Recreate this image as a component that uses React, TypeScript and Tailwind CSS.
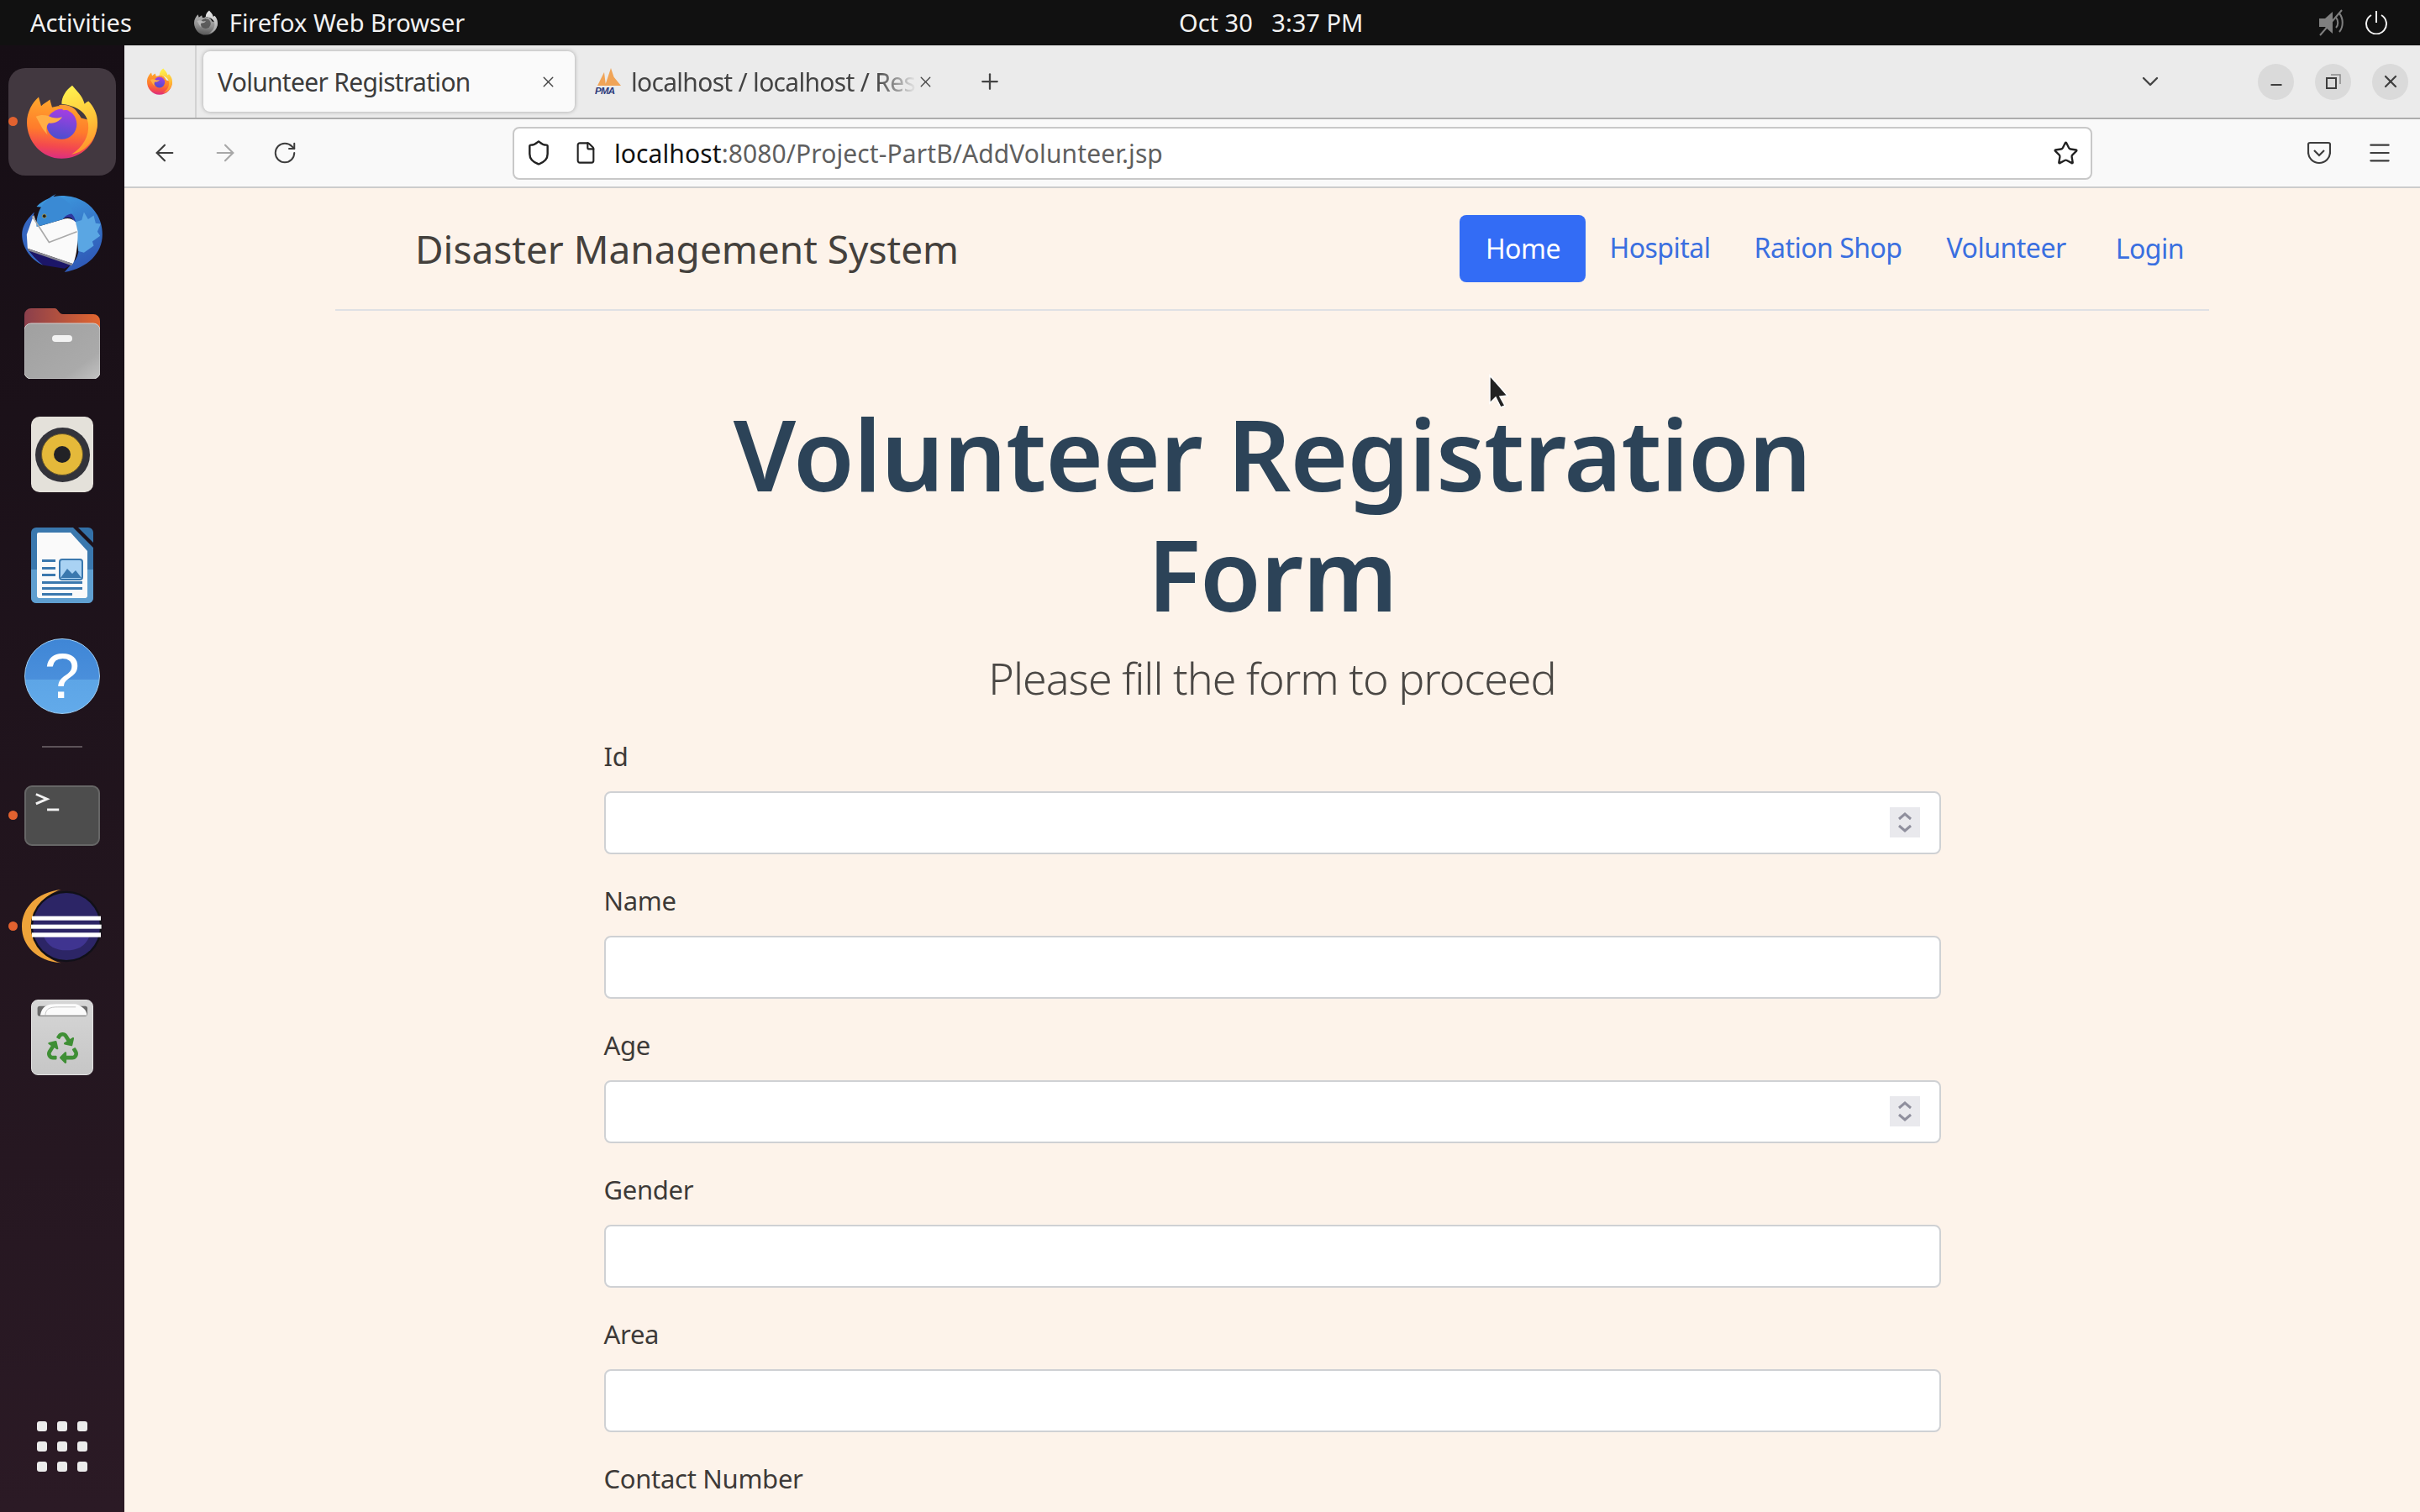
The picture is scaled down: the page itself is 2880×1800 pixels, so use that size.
import React from 'react';
import { ArrowLeft, ArrowRight, ChevronDown, File, Menu, Minus, Plus, RotateCw, Shield, Star, X } from 'lucide-react';
import { FaRecycle } from 'react-icons/fa';

const FirefoxLogo: React.FC<{ className?: string }> = ({ className }) => (
  <svg viewBox="66 62 252 263" className={className}>
    <defs>
      <linearGradient id="ffBody" x1="0.6" y1="0.1" x2="0.5" y2="1">
        <stop offset="0" stopColor="#ffa42c" />
        <stop offset="0.5" stopColor="#ff7b2b" />
        <stop offset="0.8" stopColor="#f3484f" />
        <stop offset="1" stopColor="#dc2f80" />
      </linearGradient>
      <linearGradient id="ffFlame" x1="0.4" y1="0" x2="0.6" y2="1">
        <stop offset="0" stopColor="#fff04e" />
        <stop offset="0.55" stopColor="#ffc238" />
        <stop offset="1" stopColor="#ff8f2c" />
      </linearGradient>
      <linearGradient id="ffGlobe" x1="0.6" y1="0" x2="0.4" y2="1">
        <stop offset="0" stopColor="#a63ee2" />
        <stop offset="1" stopColor="#4a4fce" />
      </linearGradient>
    </defs>
    <path d="M66 195C66 160 85 125 108 105L117 137C127 128 138 122 148 114L156 142C190 130 240 140 260 180L318 195C318 270 262 325 190 325C120 325 66 265 66 195Z" fill="url(#ffBody)" />
    <path d="M228 64C240 80 265 100 272 130C275 125 282 122 286 120C305 140 318 165 318 195C318 250 280 300 225 310C265 285 290 245 285 200C280 160 245 140 205 132L190 130C190 105 205 80 228 64Z" fill="url(#ffFlame)" />
    <circle cx="190" cy="202" r="54" fill="url(#ffGlobe)" />
    <path d="M180 134C210 128 240 142 248 164C235 152 215 148 196 152Z" fill="#ff9a35" />
    <path d="M98 175C120 165 140 170 155 178C170 182 180 180 192 176C180 195 160 200 145 198C135 205 133 225 140 240C120 220 110 195 98 175Z" fill="#ffae45" />
  </svg>
);

const ThunderbirdLogo: React.FC = () => (
  <svg viewBox="48 452 288 283" className="w-[96px] h-[94px]">
    <defs>
      <linearGradient id="tbBlue" x1="0.3" y1="0" x2="0.7" y2="1">
        <stop offset="0" stopColor="#3d97dd" />
        <stop offset="1" stopColor="#2e55b4" />
      </linearGradient>
    </defs>
    <path d="M92 520C65 545 48 570 48 600C48 650 85 695 125 710C100 690 80 670 68 650L75 590Z" fill="#3566c0" />
    <path d="M72 655C90 680 110 700 125 710L200 722L232 706Z" fill="#1c1668" />
    <path d="M100 500C130 470 170 458 205 462C285 468 336 528 336 600C336 665 285 720 200 735L215 718L240 690C260 660 250 610 245 570C230 530 190 510 100 500Z" fill="url(#tbBlue)" />
    <path d="M240 555L262 548L270 520L285 545L305 532L312 560L330 562L318 590L328 605L300 625L305 640L270 665L250 660Z" fill="#5aa6e3" />
    <path d="M90 530L65 600L68 650L230 705C240 690 248 650 248 590L240 555C225 540 210 540 195 545L105 572Z" fill="#fafafa" />
    <path d="M68 650L230 705L226 712L72 658Z" fill="#8a8a92" />
    <path d="M195 545C205 535 228 535 240 555C238 535 225 520 205 515Z" fill="#2d37a0" />
    <path d="M100 572C98 530 115 480 170 455L160 464C200 462 225 490 232 525C215 525 200 535 195 545L105 572Z" fill="#3a8ad4" />
    <path d="M85 535L145 628L245 590" fill="none" stroke="#a9a9a9" strokeWidth="5" />
    <circle cx="128" cy="534" r="7" fill="#222222" stroke="#c9b24e" strokeWidth="2" />
  </svg>
);

const FolderIcon: React.FC = () => (
  <svg viewBox="0 0 90 84" className="w-[90px] h-[84px]">
    <defs>
      <linearGradient id="folderTab" x1="0" y1="0" x2="1" y2="0">
        <stop offset="0" stopColor="#8a3f4c" />
        <stop offset="1" stopColor="#e2662f" />
      </linearGradient>
      <linearGradient id="folderBody" x1="0" y1="0" x2="1" y2="1">
        <stop offset="0" stopColor="#a0a0a0" />
        <stop offset="0.75" stopColor="#aaaaaa" />
        <stop offset="1" stopColor="#c2c2c2" />
      </linearGradient>
    </defs>
    <path d="M0 8a8 8 0 0 1 8-8h28c4 0 5 7 10 7h36a8 8 0 0 1 8 8v22H0z" fill="url(#folderTab)" />
    <rect x="0" y="18" width="90" height="66" rx="8" fill="url(#folderBody)" stroke="#cfcfcf" strokeWidth="1" />
    <rect x="33" y="32" width="24" height="8" rx="4" fill="#f2f2f2" />
  </svg>
);

const RhythmboxIcon: React.FC = () => (
  <div className="w-[74px] h-[90px] rounded-[10px] bg-[#e4e1da] flex items-center justify-center">
    <div className="w-[65px] h-[65px] rounded-full bg-[#33333a] flex items-center justify-center">
      <div className="w-[50px] h-[50px] rounded-full bg-[#e5b93a] border-[1px] border-[#6b5a2a] flex items-center justify-center">
        <div className="w-[20px] h-[20px] rounded-full bg-[#222226]"></div>
      </div>
    </div>
  </div>
);

const WriterIcon: React.FC = () => (
  <svg viewBox="0 0 74 90" className="w-[74px] h-[90px]">
    <path d="M6 0h44l24 24v60a6 6 0 0 1-6 6H6a6 6 0 0 1-6-6V6a6 6 0 0 1 6-6z" fill="#3a78ae" />
    <path d="M56 0h12a6 6 0 0 1 6 6v12z" fill="#3371a8" />
    <path d="M7 8a2 2 0 0 1 2-2h38l20 22v54a2 2 0 0 1-2 2H9a2 2 0 0 1-2-2z" fill="#fafafa" />
    <path d="M0 50h7v32a2 2 0 0 0 2 2h56a2 2 0 0 0 2-2V50h7v34a6 6 0 0 1-6 6H6a6 6 0 0 1-6-6z" fill="#5f9fd0" />
    <rect x="34" y="38" width="27" height="24" rx="3" fill="#a9d2f3" stroke="#3a78ae" strokeWidth="2" />
    <path d="M35 60l8-11 6 6 4-4 7 9z" fill="#3a78ae" />
    <g fill="#3a78ae">
      <rect x="13" y="38" width="16" height="3" />
      <rect x="13" y="47" width="16" height="3" />
      <rect x="13" y="55" width="16" height="3" />
      <rect x="13" y="64" width="48" height="3" />
      <rect x="13" y="71" width="48" height="3" />
      <rect x="13" y="78" width="36" height="3" />
    </g>
  </svg>
);

const HelpIcon: React.FC = () => (
  <div className="w-[90px] h-[90px] rounded-full bg-[linear-gradient(to_bottom,#3f86d6_0%,#4a8fdb_54%,#5da5e6_54%,#62aaea_100%)] border border-[#9ccbf0] flex items-center justify-center">
    <span className="font-['Liberation_Sans',sans-serif] text-[76px] leading-none text-white">?</span>
  </div>
);

const TerminalIcon: React.FC = () => (
  <div className="relative w-[90px] h-[72px] rounded-[9px] bg-[#4d4d4d] border-[2px] border-[#666666]">
    <svg viewBox="0 0 90 72" className="absolute inset-0 w-full h-full">
      <path d="M12 9l14 6-14 6" fill="none" stroke="#f2f2f2" strokeWidth="3" />
      <rect x="26" y="27" width="15" height="3" fill="#f2f2f2" />
    </svg>
  </div>
);

const EclipseIcon: React.FC = () => (
  <svg viewBox="48 30 288 264" className="w-[96px] h-[88px]">
    <path d="M188 30C100 40 48 95 48 162C48 230 100 285 188 292C125 275 85 225 85 162C85 100 125 50 188 30Z" fill="#eea33a" />
    <circle cx="207" cy="162" r="127" fill="#111018" />
    <circle cx="207" cy="162" r="120" fill="#2c2566" />
    <path d="M125 195H290C275 235 245 247 207 247C170 247 140 235 125 195Z" fill="#3f3490" />
    <rect x="84" y="125" width="246" height="15" fill="#ffffff" />
    <rect x="81" y="155" width="251" height="15" fill="#ffffff" />
    <rect x="84" y="184" width="246" height="16" fill="#ffffff" />
  </svg>
);

const TrashIcon: React.FC = () => (
  <div className="relative w-[74px] h-[90px] rounded-[8px] bg-gradient-to-b from-[#d6d6d6] to-[#c6c6c6] border border-[#e2e2e2]">
    <svg viewBox="82 425 218 265" className="absolute inset-0 w-full h-full">
      <rect x="102" y="445" width="180" height="36" rx="8" fill="#6b6b6b" />
      <path d="M112 478C118 445 135 437 170 437H240C265 445 280 460 280 478Z" fill="#fbfbfb" />
      <path d="M130 478C132 455 145 448 175 448H240" fill="none" stroke="#c4c4c4" strokeWidth="3" />
    </svg>
    <FaRecycle className="absolute left-[18px] top-[38px] w-[37px] h-[37px] text-[#3f8f35]" />
  </div>
);

const DockItem: React.FC<{ running?: boolean; active?: boolean; children: React.ReactNode }> = ({ running, active, children }) => (
  <div className="relative h-[132px] flex items-center justify-center">
    {active && <div className="absolute left-[10px] right-[10px] top-[2px] bottom-[2px] rounded-[20px] bg-[#423840]"></div>}
    {running && <div className="absolute left-[10px] top-[60px] w-[11px] h-[11px] rounded-full bg-[#e2622f]"></div>}
    <div className="relative flex items-center justify-center">{children}</div>
  </div>
);

const Dock: React.FC = () => (
  <aside className="w-[148px] shrink-0 flex flex-col pt-[25px] pb-[48px] bg-gradient-to-b from-[#160e15] to-[#2b1a25]">
    <DockItem running active><FirefoxLogo className="w-[84px] h-[88px]" /></DockItem>
    <DockItem><ThunderbirdLogo /></DockItem>
    <DockItem><FolderIcon /></DockItem>
    <DockItem><RhythmboxIcon /></DockItem>
    <DockItem><WriterIcon /></DockItem>
    <DockItem><HelpIcon /></DockItem>
    <div className="mx-[50px] h-[2px] mt-[17px] bg-[#5c5258]"></div>
    <div className="mt-[15px]"><DockItem running><TerminalIcon /></DockItem></div>
    <DockItem running><EclipseIcon /></DockItem>
    <DockItem><TrashIcon /></DockItem>
    <div className="mt-auto grid grid-cols-3 gap-x-[12px] gap-y-[12px] w-[60px] mx-auto">
      {Array.from({ length: 9 }).map((_, i) => (
        <div key={i} className="w-[12px] h-[12px] rounded-[3px] bg-[#ececec]"></div>
      ))}
    </div>
  </aside>
);

const TopBar: React.FC = () => (
  <header className="relative h-[54px] shrink-0 bg-[#111111] text-[#f2f2f2] flex items-center text-[29px] tracking-[0px]">
    <span className="ml-[36px]">Activities</span>
    <FirefoxLogo className="ml-[74px] w-[28px] h-[30px] grayscale" />
    <span className="ml-[14px]">Firefox Web Browser</span>
    <span className="absolute left-[1403px] whitespace-pre">Oct 30   3:37 PM</span>
    <div className="ml-auto mr-[38px] flex items-center gap-[25px]">
      <svg viewBox="0 0 30 32" className="w-[30px] h-[32px]">
        <path d="M1 11h7l9-8v26l-9-8H1z" fill="#7f7f7f" />
        <path d="M21 10c3 3 3 9 0 12M25 5c5 6 5 16 0 22" fill="none" stroke="#7f7f7f" strokeWidth="2" />
        <path d="M2 31L28 1" stroke="#7f7f7f" strokeWidth="2" />
      </svg>
      <svg viewBox="0 0 28 28" className="w-[28px] h-[28px]">
        <path d="M8 5a12 12 0 1 0 12 0" fill="none" stroke="#f2f2f2" strokeWidth="2" />
        <path d="M14 0v14" stroke="#f2f2f2" strokeWidth="2" />
      </svg>
    </div>
  </header>
);

const PmaIcon: React.FC = () => (
  <svg viewBox="0 0 32 32" className="w-[32px] h-[32px]">
    <path d="M3 21L11 5l2 16zM12 21L19 0l7 21zM26 21l-4-11 9 11z" fill="#f0a457" />
    <text x="0" y="31" fontSize="11.5" fontStyle="italic" fontWeight="700" fill="#2b3a7a" fontFamily="Liberation Sans, sans-serif">PMA</text>
  </svg>
);

const WinButton: React.FC<{ children: React.ReactNode }> = ({ children }) => (
  <div className="w-[43px] h-[43px] rounded-full bg-[#dadada] flex items-center justify-center text-[#3d3d3d]">{children}</div>
);

const TabStrip: React.FC = () => (
  <div className="h-[88px] shrink-0 bg-[#ebebeb] border-b-[2px] border-[#adadad] flex items-center text-[30px] tracking-[-0.7px]">
    <div className="w-[86px] h-full flex items-center justify-center border-r-[2px] border-[#d2d2d2]">
      <FirefoxLogo className="w-[30px] h-[32px]" />
    </div>
    <div className="ml-[8px] w-[442px] h-[72px] rounded-[8px] bg-[#fafafa] shadow-[0_0_5px_rgba(0,0,0,0.3)] flex items-center pl-[17px] pr-[21px]">
      <span className="text-[#3c3c3c] whitespace-nowrap">Volunteer Registration</span>
      <X className="ml-auto w-[21px] h-[21px] text-[#444444]" strokeWidth={1.6} />
    </div>
    <div className="ml-[24px] w-[412px] flex items-center">
      <PmaIcon />
      <span className="ml-[11px] w-[340px] overflow-hidden whitespace-nowrap text-[#444444] [mask-image:linear-gradient(to_right,black_86%,transparent_100%)]">localhost / localhost / Resources</span>
      <X className="w-[21px] h-[21px] text-[#444444]" strokeWidth={1.6} />
    </div>
    <Plus className="ml-[43px] w-[30px] h-[30px] text-[#444444]" strokeWidth={1.8} />
    <ChevronDown className="ml-[1350px] w-[32px] h-[32px] text-[#444444]" strokeWidth={1.8} />
    <div className="ml-auto mr-[14px] flex items-center gap-[25px]">
      <WinButton><Minus className="w-[20px] h-[20px] mt-[8px]" strokeWidth={2.2} /></WinButton>
      <WinButton>
        <svg viewBox="0 0 18 18" className="w-[18px] h-[18px]">
          <rect x="1" y="5" width="11" height="12" fill="none" stroke="#3d3d3d" strokeWidth="2" />
          <path d="M6 1h11v11" fill="none" stroke="#8a8a8a" strokeWidth="1.5" />
        </svg>
      </WinButton>
      <WinButton><X className="w-[24px] h-[24px]" strokeWidth={2.2} /></WinButton>
    </div>
  </div>
);

const Toolbar: React.FC = () => (
  <div className="h-[82px] shrink-0 bg-[#f9f9f9] border-b-[2px] border-[#cccccc] flex items-center text-[#3d3d3d]">
    <ArrowLeft className="ml-[32px] w-[32px] h-[32px]" strokeWidth={1.6} />
    <ArrowRight className="ml-[40px] w-[32px] h-[32px] text-[#a8a8a8]" strokeWidth={1.6} />
    <RotateCw className="ml-[40px] w-[30px] h-[30px]" strokeWidth={1.6} />
    <div className="ml-[256px] w-[1880px] h-[63px] rounded-[8px] bg-white border-[2px] border-[#c8c8c8] flex items-center">
      <Shield className="ml-[13px] w-[32px] h-[32px] text-[#222222]" strokeWidth={1.8} />
      <File className="ml-[26px] w-[28px] h-[28px] text-[#222222]" strokeWidth={1.8} />
      <span className="ml-[20px] text-[30px] tracking-[0.1px] text-[#111111]">localhost<span className="text-[#5f5f5f]">:8080/Project-PartB/AddVolunteer.jsp</span></span>
      <Star className="ml-auto mr-[14px] w-[31px] h-[31px] text-[#222222]" strokeWidth={1.8} />
    </div>
    <div className="ml-auto mr-[32px] flex items-center gap-[42px]">
      <svg viewBox="0 0 28 28" className="w-[28px] h-[28px]">
        <path d="M3 2h22a2 2 0 0 1 2 2v9a13 13 0 0 1-26 0V4a2 2 0 0 1 2-2z" fill="none" stroke="#3d3d3d" strokeWidth="2.2" />
        <path d="M8 11l6 6 6-6" fill="none" stroke="#3d3d3d" strokeWidth="2.2" />
      </svg>
      <Menu className="w-[32px] h-[32px]" strokeWidth={1.6} />
    </div>
  </div>
);

const NavBar: React.FC = () => (
  <nav className="w-[2230px] h-[146px] mx-auto border-b-[2px] border-[#dfe0e4] flex items-center pl-[95px] pr-[30px] text-[32px] tracking-[-0.5px] text-[#3a6fe0]">
    <span className="text-[46px] tracking-[0px] text-[#44403c]">Disaster Management System</span>
    <a className="ml-auto w-[150px] h-[80px] rounded-[8px] bg-[#336cf5] text-white flex items-center justify-center">Home</a>
    <a className="ml-[28px] -mt-[2px]">Hospital</a>
    <a className="ml-[52px] -mt-[2px]">Ration Shop</a>
    <a className="ml-[53px] -mt-[2px]">Volunteer</a>
    <a className="ml-[59px]">Login</a>
  </nav>
);

const fields = [
  { label: 'Id', type: 'number' },
  { label: 'Name', type: 'text' },
  { label: 'Age', type: 'number' },
  { label: 'Gender', type: 'text' },
  { label: 'Area', type: 'text' },
  { label: 'Contact Number', type: 'text' },
];

const Field: React.FC<{ label: string; type: string }> = ({ label, type }) => (
  <div className="mb-[31px]">
    <label className="block h-[48px] mb-[18px] text-[31px] leading-[48px] tracking-[-0.3px] text-[#3d3a38]">{label}</label>
    <div className="relative h-[75px]">
      <input type="text" className="w-full h-full rounded-[8px] bg-white border-[2px] border-[#cfd1d4]" />
      {type === 'number' && (
        <svg viewBox="0 0 36 36" className="absolute right-[25px] top-[19px] w-[36px] h-[36px] bg-[#e9e9ed]">
          <path d="M11 14l7-6 7 6M11 22l7 6 7-6" fill="none" stroke="#8f8f9d" strokeWidth="3" />
        </svg>
      )}
    </div>
  </div>
);

const App: React.FC = () => {
  return (
    <div className="w-[2880px] h-[1800px] overflow-hidden flex flex-col font-['Noto_Sans',sans-serif]">
      <TopBar />
      <div className="flex-1 flex min-h-0">
        <Dock />
        <main className="relative flex-1 min-w-0 flex flex-col">
          <TabStrip />
          <Toolbar />
          <div className="relative flex-1 min-h-0 overflow-hidden bg-[#fdf3ea]">
            <NavBar />
            <section className="w-[1591px] mx-auto">
              <div className="pt-[98px] mb-[33px] text-center">
                <h1 className="max-w-[1400px] mx-auto text-[118px] leading-[143px] font-semibold tracking-[-0.9px] text-[#2c4358]">Volunteer Registration Form</h1>
                <p className="mt-[17px] text-[52px] leading-[72px] font-light tracking-[-1px] text-[#4a4744]">Please fill the form to proceed</p>
              </div>
              {fields.map((f) => (
                <Field key={f.label} label={f.label} type={f.type} />
              ))}
            </section>
            <svg viewBox="0 0 26 40" className="absolute left-[1623px] top-[221px] w-[26px] h-[40px]">
              <path d="M2 2l21 24-9 1 6 11-5 2-6-12-7 7z" fill="#222222" stroke="#ffffff" strokeWidth="1.5" />
            </svg>
          </div>
        </main>
      </div>
    </div>
  );
};

export default App;
